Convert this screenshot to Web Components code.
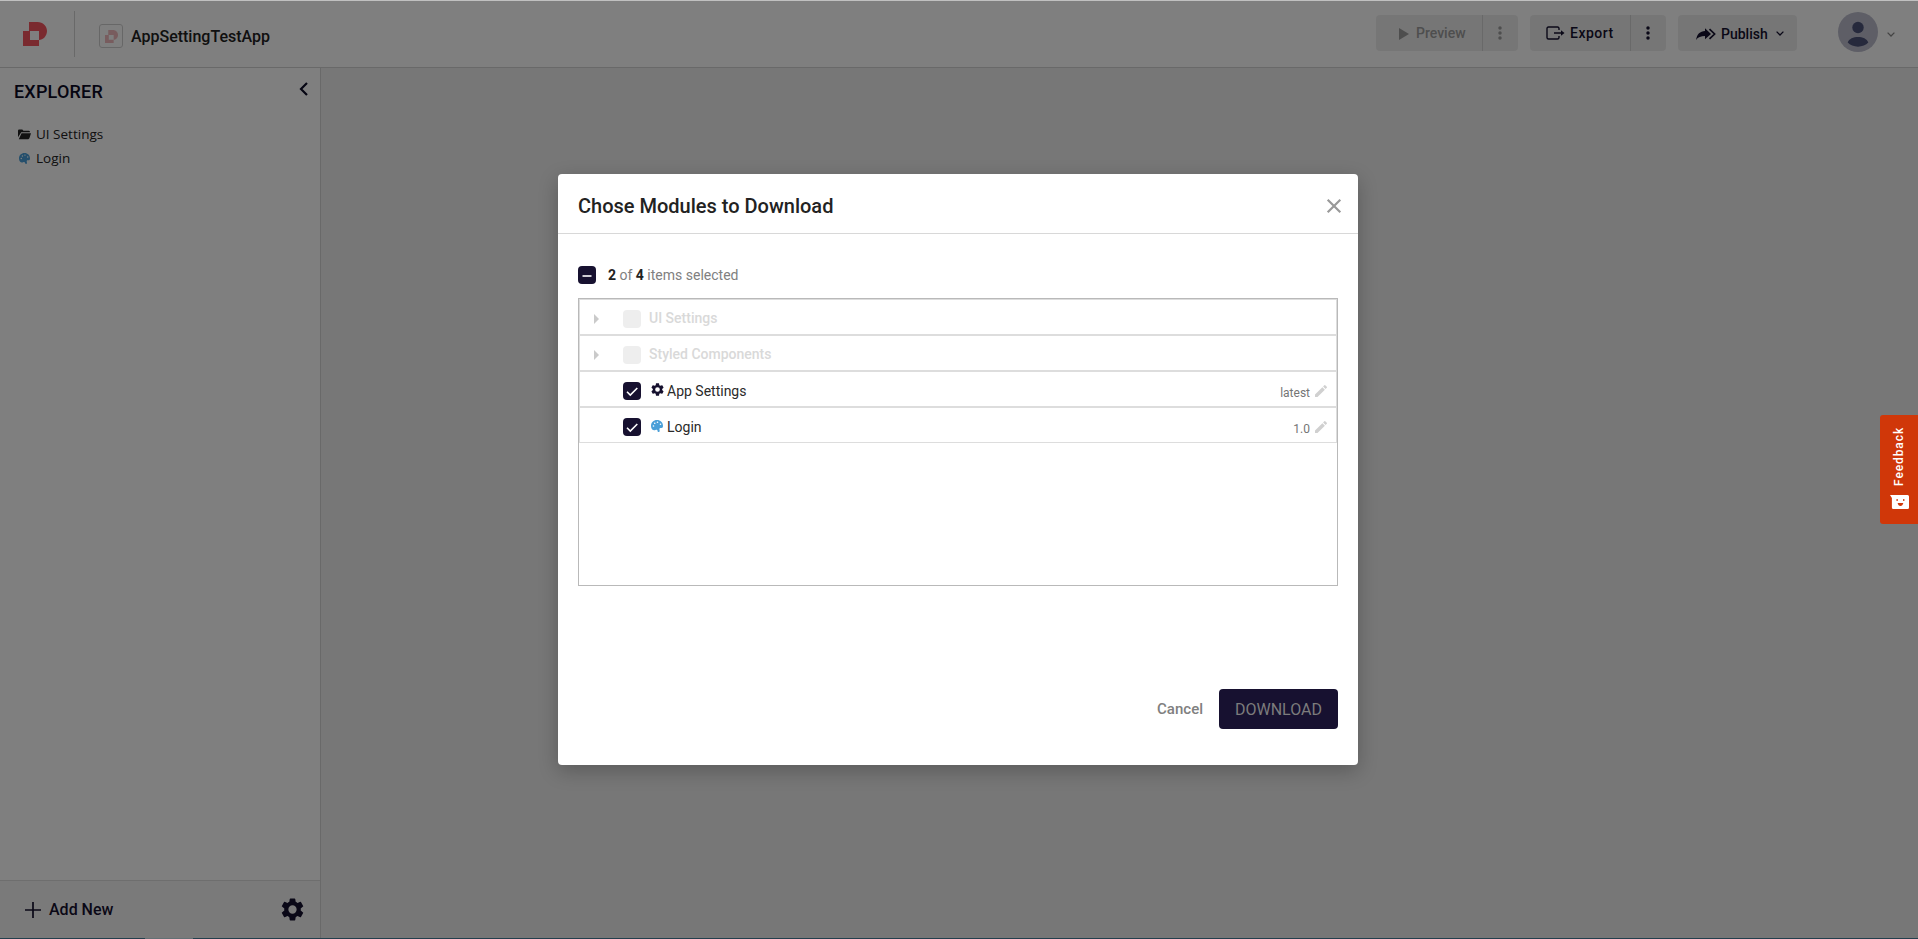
<!DOCTYPE html>
<html lang="en">
<head>
<meta charset="utf-8">
<title>AppSettingTestApp</title>
<style>
html,body{margin:0;height:100%;overflow:hidden}
body{font-family:Roboto,"Liberation Sans",sans-serif;color:#212121;font-size:14px;background:#fff}
</style>
</head>
<body>
<app-shell></app-shell>
<script>
const define=(name,html,setup)=>customElements.define(name,class extends HTMLElement{
  constructor(){
    super();
    const t=document.createElement('template');
    t.innerHTML=html;
    this.attachShadow({mode:'open'}).appendChild(t.content.cloneNode(true));
  }
  connectedCallback(){ if(setup) setup(this,this.shadowRoot); }
});

const icons={
  logo:['0 0 24 24','<path d="M6 0h8.5C20 0 24 4 24 9s-4 9-8 9v6H0V9h6zM7 9v9h9V9z" fill-rule="evenodd"/>'],
  folder:['0 0 24 20','<path d="M0 3Q0 1 2 1h6l2 2h10q2 0 2 2v1H6L0 15z"/><path d="M6.500 7.500H24L21 17q-.5 1.500-2 1.500H1.500z"/>'],
  palette:['0 0 24 24','<path fill-rule="evenodd" d="M12 0C5 0 0 5 0 12s5 10 9 8c2-1 4-.5 4 1.500 0 2 1 2.500 2.500 2.500 2.500 0 2-3 1.500-4.500-.5-2 0-3.500 2-3.500h2c2 0 3-1.500 3-4.500C24 5 19 0 12 0zM5 10.500a1.600 1.600 0 1 1 0 3.200 1.600 1.600 0 0 1 0-3.200zm2.500-5.500a1.600 1.600 0 1 1 0 3.200 1.600 1.600 0 0 1 0-3.200zM13 3a1.600 1.600 0 1 1 0 3.200A1.600 1.600 0 0 1 13 3zm6 4a1.600 1.600 0 1 1 0 3.200A1.600 1.600 0 0 1 19 7z"/>'],
  gear:['2 2 20 20','<path d="M19.140 12.940c.040-.3.060-.610.060-.940s-.020-.640-.070-.940l2.030-1.580a.49.49 0 0 0 .120-.610l-1.920-3.320a.49.49 0 0 0-.590-.220l-2.390.960a7 7 0 0 0-1.620-.940l-.360-2.540A.48.48 0 0 0 13.920 2.400h-3.840a.48.48 0 0 0-.470.410l-.360 2.540c-.590.240-1.130.570-1.620.940l-2.390-.960a.49.49 0 0 0-.590.220L2.740 8.870a.48.48 0 0 0 .120.610l2.030 1.580c-.050.300-.090.630-.090.940s.020.640.070.940l-2.030 1.580a.49.49 0 0 0-.120.610l1.920 3.320c.120.220.370.290.590.220l2.390-.960c.500.380 1.030.700 1.620.940l.360 2.540c.050.240.240.410.480.410h3.840c.240 0 .440-.170.470-.410l.360-2.540c.590-.240 1.130-.560 1.620-.940l2.390.960c.220.080.470 0 .590-.220l1.920-3.320a.49.49 0 0 0-.120-.610zM12 15.600a3.600 3.600 0 1 1 0-7.200 3.600 3.600 0 0 1 0 7.200z"/>'],
  pencil:['3 3 18 18','<path fill-rule="evenodd" d="M3 17.250V21h3.750L17.810 9.940l-3.750-3.750zM20.710 7.040a1 1 0 0 0 0-1.410l-2.340-2.340a1 1 0 0 0-1.410 0l-1.830 1.830 3.750 3.750z"/>'],
  left:['0 0 9 14','<path d="M8 1L2 7l6 6" fill="none" stroke="currentColor" stroke-width="2.200"/>'],
  down:['0 0 8 5','<path d="M.6.600L4 4 7.400.600" fill="none" stroke="currentColor" stroke-width="1.300"/>'],
  play:['0 0 10 12','<path d="M0 0l10 6-10 6z"/>'],
  dots:['0 0 4 14','<circle cx="2" cy="2" r="1.750"/><circle cx="2" cy="7" r="1.750"/><circle cx="2" cy="12" r="1.750"/>'],
  export:['0 0 19 14','<path d="M13 4V2.500Q13 1 11.500 1h-9Q1 1 1 2.500v9Q1 13 2.500 13h9q1.500 0 1.500-1.500V10M8 7h8" fill="none" stroke="currentColor" stroke-width="1.400"/><path d="M15 4.300L18.500 7 15 9.700z"/>'],
  share:['0 0 20 12','<path d="M0 12C1 6 4 3.300 9 3V.2L15 6l-6 5.200V8C5 8 2 9 0 12z"/><path d="M13.500 1.200L18.600 6l-5.100 4.800" fill="none" stroke="currentColor" stroke-width="1.700"/>'],
  plus:['0 0 16 16','<path d="M8 0v16M0 8h16" stroke="currentColor" stroke-width="1.700"/>'],
  close:['0 0 14 14','<path d="M.7.700l12.600 12.600M13.300.700L.7 13.300" stroke="currentColor" stroke-width="2.200"/>'],
  right:['0 0 5 10','<path d="M0 0l5 5-5 5z"/>'],
  avatar:['0 0 40 40','<circle cx="20" cy="20" r="20" fill="#bcbdcd"/><circle cx="20" cy="15.500" r="5.700" fill="#4c5279"/><path d="M9.700 30.500c2.300-7.300 18.300-7.300 20.600 0-4.500 5.500-16.100 5.500-20.600 0z" fill="#4c5279"/>'],
  smile:['0 0 20 16','<path d="M0 1h18.500Q20 1 20 2.500v11q0 1.500-1.500 1.500h-15Q2 15 2 13.500V4z"/><path d="M7.500 5v2M14.500 5v2" stroke="#d03709" stroke-width="1.300"/><path d="M8 9h6q-.7 3-3 3T8 9z" fill="#d03709"/>']
};
define('ui-icon','<style>:host{display:block;flex:none}div{display:contents}svg{display:block;width:100%;height:100%;fill:currentColor;overflow:visible}</style><div></div>',(h,r)=>{
  const [box,body]=icons[h.getAttribute('name')];
  const w=h.getAttribute('w'), t=h.getAttribute('h')||w;
  h.style.width=w+'px';h.style.height=t+'px';
  r.querySelector('div').innerHTML=`<svg viewBox="${box}" preserveAspectRatio="none">${body}</svg>`;
});

define('app-button',`<style>
:host{display:flex;height:36px;border-radius:4px;background:#ededed;color:#15102e;overflow:hidden;margin-top:-2px}
:host([disabled]){color:#9c9c9c}
.main{flex:1;display:flex;align-items:center;font-weight:500;font-size:14px}
.more{display:none;border-left:1px solid #d2d2d2;align-items:center;justify-content:center;box-sizing:border-box;width:36px;padding-right:1px}
:host([split]) .more{display:flex}
</style><div class="main"><slot></slot></div><div class="more"><ui-icon name="dots" w="4" h="14"></ui-icon></div>`);

define('app-header',`<style>
:host{display:flex;align-items:center;height:68px;box-sizing:border-box;border-bottom:1px solid #d2d2d2;padding:1px 23px 0 23px;background:#fff}
.line{width:1px;height:46px;background:#d2d2d2;margin:0 24px 0 27px}
.box{width:24px;height:24px;box-sizing:border-box;border:1px solid #cfcfcf;border-radius:3px;display:flex;align-items:center;justify-content:center;color:#f0b9bc;margin-top:4px}
.name{margin:4px auto 0 8px;font-size:16px;font-weight:500}
.g{margin-right:12px}
</style>
<ui-icon name="logo" w="24" style="color:#f5545f"></ui-icon><div class="line"></div>
<div class="box"><ui-icon name="logo" w="13"></ui-icon></div><div class="name">AppSettingTestApp</div>
<app-button class="g" disabled split style="width:142px"><ui-icon name="play" w="10" h="12" style="margin:1px 7px 0 23px"></ui-icon>Preview</app-button>
<app-button class="g" split style="width:136px"><ui-icon name="export" w="19" h="14" style="margin:-1px 5px 0 16px"></ui-icon><span style="letter-spacing:.500px">Export</span></app-button>
<app-button style="width:119px;margin-right:41px"><ui-icon name="share" w="20" h="12" style="margin:1px 5px 0 18px"></ui-icon><span style="margin:1px 8px 0 0">Publish</span><ui-icon name="down" w="8" h="5"></ui-icon></app-button>
<ui-icon name="avatar" w="40" style="margin-top:-4px"></ui-icon><ui-icon name="down" w="8" h="5" style="margin-left:9px;color:#888"></ui-icon>`);

define('tree-item',`<style>:host{display:flex;align-items:center;height:24px;font:13.500px "Open Sans","Noto Sans",sans-serif;color:#222}.i{width:13px;margin-right:5px;display:flex;justify-content:center}</style><span class="i"><slot name="icon"></slot></span><slot></slot>`);

define('app-sidebar',`<style>
:host{display:flex;flex-direction:column;width:321px;box-sizing:border-box;border-right:1px solid #d2d2d2;background:#fff}
.top{display:flex;justify-content:space-between;padding:13px 12px 0 14px;font-size:18px;line-height:22px;height:42px;box-sizing:border-box;color:#0b0a25;font-weight:500;letter-spacing:.200px}
.tree{flex:1;padding:12px 18px}
.foot{height:58px;box-sizing:border-box;border-top:1px solid #dcdcdc;background:#f5f5f5;display:flex;align-items:center;padding:0 16px 0 25px;font-size:16px;font-weight:500;color:#15102e}
</style>
<div class="top"><span>EXPLORER</span><ui-icon name="left" w="9" h="14" style="margin-top:1px"></ui-icon></div>
<div class="tree"><tree-item><ui-icon slot="icon" name="folder" w="13" h="11"></ui-icon>UI Settings</tree-item>
<tree-item><ui-icon slot="icon" name="palette" w="11" style="color:#4a9fd8"></ui-icon>Login</tree-item></div>
<div class="foot"><ui-icon name="plus" w="16"></ui-icon><span style="margin:0 auto 0 8px">Add New</span><ui-icon name="gear" w="23"></ui-icon></div>`);

define('check-box',`<style>:host{display:flex;width:18px;height:18px;border-radius:4px;background:#171130;flex:none}:host([state=off]){background:#eee}svg{width:18px;height:18px;fill:none;stroke:#fff;stroke-width:1.600}path{display:none}:host([state=on]) .on,:host([state=mixed]) .mixed{display:block}</style><svg viewBox="0 0 18 18"><path class="on" d="M4 9.800l3.300 3.300L14.300 6"/><path class="mixed" d="M4.500 10h9"/></svg>`);

define('module-row',`<style>
:host{display:flex;align-items:center;height:36px;box-sizing:border-box;border:1px solid #ddd;padding:4px 9px 0 0;color:#2a2a2a}
.arrow{width:43px;box-sizing:border-box;padding-left:14px;color:#cacaca}
.label{display:flex;align-items:center;margin-left:8px;flex:1}
:host([disabled]) .label{color:#d9d9d9;font-weight:500;margin-top:-2px}
:host([disabled]) .ver,:host(:not([disabled])) .arrow ui-icon{display:none}
.ver{display:flex;align-items:center;color:#757575;font-size:12px}
.ver ui-icon{color:#d0d0d0;margin:-1px 0 0 5px}
</style><div class="arrow"><ui-icon name="right" w="5" h="10"></ui-icon></div><check-box></check-box><div class="label"><slot></slot></div><div class="ver"><span style="margin-top:3px"></span><ui-icon name="pencil" w="12"></ui-icon></div>`,(h,r)=>{
  r.querySelector('check-box').setAttribute('state',h.hasAttribute('disabled')?'off':'on');
  r.querySelector('.ver span').textContent=h.getAttribute('version')||'';
});

define('module-dialog',`<style>
:host{display:flex;flex-direction:column;width:800px;height:591px;background:#fff;border-radius:4px;box-shadow:0 6px 20px rgba(0,0,0,.24)}
.head{height:60px;box-sizing:border-box;border-bottom:1px solid #d8d8d8;display:flex;align-items:center;justify-content:space-between;padding:5px 17px 0 20px;font-size:20px;font-weight:500;color:#222}
.body{padding:32px 20px 36px;flex:1;display:flex;flex-direction:column}
.sum{display:flex;align-items:center;height:18px;gap:12px;color:#808080;margin-bottom:14px}
b{color:#222;font-weight:700}
.list{height:288px;box-sizing:border-box;border:1px solid #b9b9b9}
.actions{margin-top:auto;display:flex;justify-content:flex-end;align-items:center;font-size:16px;gap:16px;color:#808080}
.cancel{font-size:15px;font-weight:500}
.ok{width:119px;height:40px;border-radius:4px;background:#171130;display:flex;align-items:center;justify-content:center;color:#7c7c7c;padding-top:1px;box-sizing:border-box}
</style>
<div class="head"><span>Chose Modules to Download</span><ui-icon name="close" w="14" style="color:#999"></ui-icon></div>
<div class="body"><div class="sum"><check-box state="mixed"></check-box><span><b>2</b> of <b>4</b> items selected</span></div>
<div class="list"><module-row disabled>UI Settings</module-row><module-row disabled>Styled Components</module-row>
<module-row version="latest"><ui-icon name="gear" w="13" style="margin:-3px 3px 0 2px;color:#15102e"></ui-icon>App Settings</module-row>
<module-row version="1.0"><ui-icon name="palette" w="12" style="margin:-3px 4px 0 2px;color:#4a9fd8"></ui-icon>Login</module-row></div>
<div class="actions"><span class="cancel">Cancel</span><div class="ok">DOWNLOAD</div></div></div>`);

define('feedback-tab',`<style>
:host{display:flex;flex-direction:column;align-items:center;width:38px;height:109px;background:#d03709;color:#fff;border-radius:3px 0 0 3px;box-sizing:border-box;padding-top:13px;gap:8px}
span{writing-mode:vertical-rl;transform:rotate(180deg);font:500 12px Roboto,sans-serif;letter-spacing:.900px;height:58px;line-height:14px}
</style><span>Feedback</span><ui-icon name="smile" w="19" h="16"></ui-icon>`);

define('app-shell',`<style>
:host{display:flex;flex-direction:column;height:100vh;position:relative;background:#efefef}
.mid{flex:1;display:flex}
.base{height:1px;background:#467e9a;display:flex}
.base i{width:48px;margin-left:145px;background:#c8e0ea}
.shade{position:absolute;inset:0;background:rgba(0,0,0,.5);display:flex;justify-content:center;align-items:center;box-shadow:inset 0 1px #c0c0c0;box-sizing:border-box;padding-right:2px}
feedback-tab{position:absolute;right:0;top:415px}
</style><app-header></app-header><div class="mid"><app-sidebar></app-sidebar></div><div class="base"><i></i></div>
<div class="shade"><module-dialog></module-dialog></div><feedback-tab></feedback-tab>`);
</script>
</body>
</html>
